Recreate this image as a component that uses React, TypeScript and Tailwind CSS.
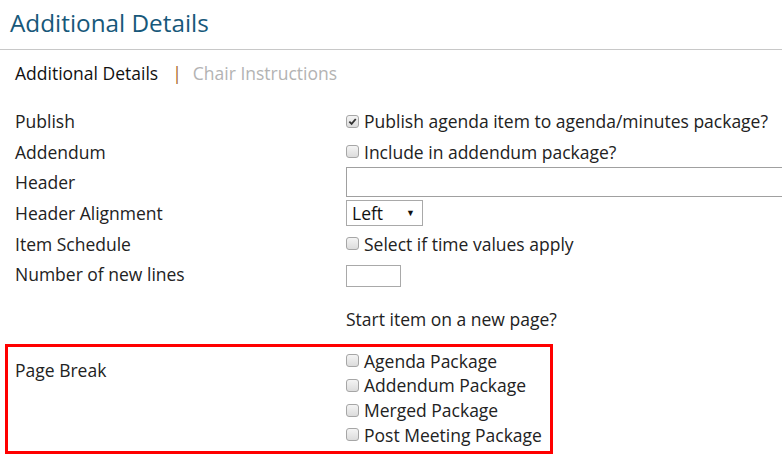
import React from "react";

function Box({ checked = false }: { checked?: boolean }) {
  return (
    <span className="inline-flex h-[13px] w-[13px] shrink-0 items-center justify-center rounded-[3px] border border-[#a6a6a6] bg-[linear-gradient(#f4f4f4,#dcdcdc)]">
      {checked && (
        <svg viewBox="0 0 10 10" className="h-[9px] w-[9px]">
          <path d="M1.5 5.2 L4 7.6 L8.6 2.2" fill="none" stroke="#333" strokeWidth="2" />
        </svg>
      )}
    </span>
  );
}

function Check({ label, checked }: { label: string; checked?: boolean }) {
  return (
    <div className="flex items-center gap-[5px]">
      <Box checked={checked} />
      <span>{label}</span>
    </div>
  );
}

function Row({ label, children }: { label: string; children?: React.ReactNode }) {
  return (
    <div className="grid h-[30.6px] grid-cols-[331px_1fr] items-center">
      <div>{label}</div>
      <div className="flex items-center whitespace-nowrap">{children}</div>
    </div>
  );
}

export default function App() {
  return (
    <div className="h-[455px] w-[782px] overflow-hidden bg-white font-['Open_Sans',sans-serif] text-[17.5px] text-[#222]">
      <div className="h-[50px] border-b border-[#c8c8c8] pl-[10px] pt-[6px]">
        <h1 className="text-[24.3px] leading-[34px] text-[#17587a]">Additional Details</h1>
      </div>

      <div className="flex items-center pl-[15px] pt-[12px] leading-[22px]">
        <span className="text-[#111]">Additional Details</span>
        <span className="ml-[14px] mr-[11px] text-[#a8631f]">|</span>
        <span className="text-[#b3b3b3]">Chair Instructions</span>
      </div>

      <div className="pl-[15px] pt-[22px]">
        <Row label="Publish">
          <Check label="Publish agenda item to agenda/minutes package?" checked />
        </Row>
        <Row label="Addendum">
          <Check label="Include in addendum package?" />
        </Row>
        <Row label="Header">
          <div className="h-[30px] w-[450px] shrink-0 border border-[#a0a0a0]" />
        </Row>
        <Row label="Header Alignment">
          <div className="flex h-[26px] w-[77px] items-center justify-between border border-[#a9a9a9] pl-[5px] pr-[7px]">
            <span className="text-[#111]">Left</span>
            <span className="text-[9px] text-[#111]">▼</span>
          </div>
        </Row>
        <Row label="Item Schedule">
          <Check label="Select if time values apply" />
        </Row>
        <Row label="Number of new lines">
          <div className="mt-[3px] h-[22px] w-[55px] border border-[#a9a9a9]" />
        </Row>
        <div className="grid h-[43px] grid-cols-[331px_1fr] items-end">
          <div />
          <div>Start item on a new page?</div>
        </div>
      </div>

      <div className="mt-[11px] ml-[5px] w-[548px] border-[3px] border-[#ff0000] pb-[4px] pl-[7px] pt-[2px]">
        <div className="grid grid-cols-[331px_1fr]">
          <div className="pt-[8px]">Page Break</div>
          <div className="flex flex-col whitespace-nowrap">
            <div className="h-[24.6px] flex items-center"><Check label="Agenda Package" /></div>
            <div className="h-[24.6px] flex items-center"><Check label="Addendum Package" /></div>
            <div className="h-[24.6px] flex items-center"><Check label="Merged Package" /></div>
            <div className="h-[24.6px] flex items-center"><Check label="Post Meeting Package" /></div>
          </div>
        </div>
      </div>
    </div>
  );
}
